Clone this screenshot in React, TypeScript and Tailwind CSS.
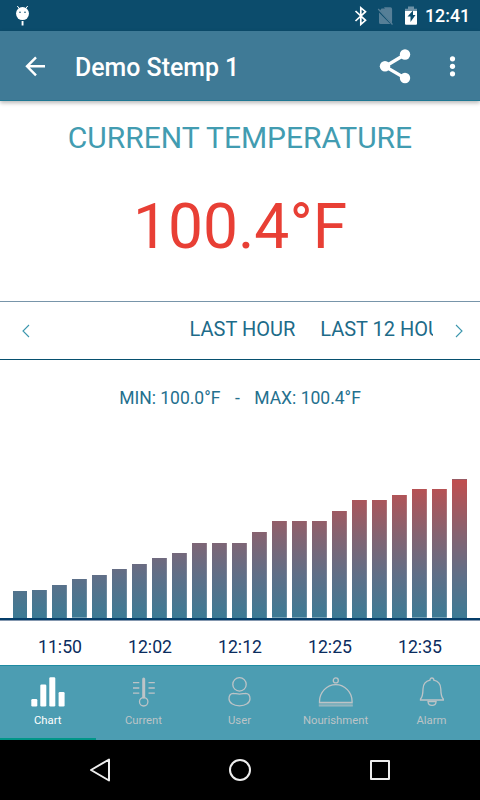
import type { ReactNode } from "react";

const barHeights = [27, 28, 33.5, 38.7, 43.5, 49, 54, 60, 65, 75.3, 75.3, 75.3, 86, 96.7, 96.7, 96.7, 107.3, 118, 118, 123.5, 128.7, 128.7, 139.3];
const times = ["11:50", "12:02", "12:12", "12:25", "12:35"];

function StatusBar() {
  return (
    <header className="flex h-[31px] shrink-0 items-start bg-[#0c4c6c] text-white">
      <svg className="ml-4 mt-1" width="14" height="24" viewBox="16 4 14 24" fill="white">
        <path d="M17.3 6l2.3 3M27.7 6l-2.3 3" stroke="white" strokeWidth="1" />
        <circle cx="22.5" cy="13.6" r="6.5" />
        <circle cx="20" cy="12.2" r=".8" fill="#0c4c6c" />
        <circle cx="25" cy="12.2" r=".8" fill="#0c4c6c" />
        <path d="M21.6 21h1.900v4.500h-1.900z" />
      </svg>
      <svg className="ml-auto" width="68" height="31" viewBox="352 0 68 31">
        <path d="M355.5 11l10 9.3-4.700 4V7.800l4.700 3.900-10 9.300" fill="none" stroke="white" strokeWidth="1.7" />
        <path d="M384 7.300h6.400q1.700 0 1.700 1.700v12zM379 12.500v10q0 1.600 1.600 1.600h9.800z" fill="#567f97" />
        <path d="M378.200 9l14.300 15.500" stroke="#567f97" strokeWidth="1.2" />
        <path d="M381.500 8.500h9q1.500 0 1.500 1.500v13.500l-12-13z" fill="#567f97" />
        <path d="M405 11V8.800h3V6.500h6v2.300h3V11z" fill="#6d91a6" />
        <path d="M405 11h12v12.800q0 1-1 1h-10q-1 0-1-1z" fill="white" />
        <path d="M413 10.500l-5.500 6h3v5.500l5-7H413z" fill="#0c4c6c" />
      </svg>
      <span className="ml-[5px] mr-[10px] mt-[5px] w-[45px] text-[17.8px] font-medium leading-[22px]">12:41</span>
    </header>
  );
}

function AppBar() {
  return (
    <div className="z-10 flex h-[70px] shrink-0 items-center border-b border-[#217893] bg-[#3f7a96] text-white shadow-[0_2px_4px_rgba(0,0,0,0.28)]">
      <svg className="ml-6" width="22" height="22" viewBox="24 55 22 22" fill="none" stroke="white" strokeWidth="2.4">
        <path d="M45 66.300H27M36 57.300l-9 9 9 9" />
      </svg>
      <h1 className="ml-[29px] mt-[5px] text-[24.9px] font-medium leading-8">Demo Stemp 1</h1>
      <svg className="ml-auto" width="32" height="36" viewBox="379 48 32 36" fill="white">
        <path d="M405 54.500l-20 12 20 11.700" fill="none" stroke="white" strokeWidth="3.3" />
        <circle cx="405" cy="54.500" r="5.2" />
        <circle cx="385" cy="66.300" r="5.2" />
        <circle cx="405" cy="78" r="5.2" />
      </svg>
      <svg className="ml-[36px] mr-[22px]" width="11" height="24" viewBox="447 54 11 24" fill="white">
        <circle cx="452.500" cy="58.800" r="2.600" />
        <circle cx="452.500" cy="66.300" r="2.600" />
        <circle cx="452.500" cy="73.800" r="2.600" />
      </svg>
    </div>
  );
}

function Chevron({ right = false }: { right?: boolean }) {
  return (
    <svg width="8" height="14" viewBox="0 0 8 14" fill="none" stroke="#3b96ad" strokeWidth="1.1">
      <path d={right ? "M1 1l6 6-6 6" : "M7 1L1 7l6 6"} />
    </svg>
  );
}

function Chart() {
  return (
    <section className="flex h-[246px] flex-col">
      <div className="flex h-[199px] items-end gap-[5.3px] pl-[12.5px]">
        {barHeights.map((height, i) => (
          <div
            key={i}
            className="w-[14.7px] shrink-0 bg-[linear-gradient(to_top,#3c7b95_0%,#5f6f88_30%,#856371_60%,#a7575d_83%,#c24e4e_100%)] bg-[length:100%_139px] bg-bottom"
            style={{ height }}
          />
        ))}
      </div>
      <div className="h-[3px] shrink-0 border-b border-[#8497af] bg-[#053e69]" />
      <div className="flex pl-[15px] pt-[15px] text-[17.7px] leading-[22px] text-[#0a2c5e]">
        {times.map((time) => (
          <span key={time} className="w-[90px] text-center">{time}</span>
        ))}
      </div>
    </section>
  );
}

function Tab({ label, active = false, children }: { label: string; active?: boolean; children: ReactNode }) {
  return (
    <div className={`flex flex-col items-center border-b-2 ${active ? "w-[95.5px] border-[#009688] text-white" : "w-24 border-transparent text-[#bdc4c7]"}`}>
      <svg className="mt-[10px]" width="40" height="32" viewBox="0 0 40 32" fill="none" stroke="currentColor" strokeWidth="1.3">
        {children}
      </svg>
      <span className="mt-[5px] text-[11.3px] leading-4">{label}</span>
    </div>
  );
}

function Tabs() {
  return (
    <nav className="flex h-[75px] shrink-0 border-t border-[#1f8ba2] bg-[#4c9db2]">
      <Tab label="Chart" active>
        <g fill="currentColor" stroke="none">
          <rect x="3.300" y="23" width="6" height="7.500" rx="1.200" />
          <rect x="12.300" y="8.500" width="6" height="22" rx="1.200" />
          <rect x="21.300" y="1.300" width="6" height="29.200" rx="1.200" />
          <rect x="30.600" y="16" width="6" height="14.500" rx="1.200" />
        </g>
      </Tab>
      <Tab label="Current">
        <path d="M19.700 21V3" strokeWidth="3" strokeLinecap="round" />
        <circle cx="19.700" cy="25.800" r="4.200" />
        <path d="M9 6.700h6.300M9 12h6.300M9 17.200h6.300M24.500 6.700h6.300M24.500 12h6.300M24.500 17.200h6.300" />
      </Tab>
      <Tab label="User">
        <path d="M19.500 1.700a6.700 6.700 0 1 1 0 13.400a6.700 6.700 0 1 1 0-13.400zM13.500 17.300c2 .2 3.700.8 6 .8s4-.6 6-.8c2.700 0 4.500 2.100 4.500 5.500 0 4-4.300 7-10.500 7S9 26.800 9 22.800c0-3.400 1.800-5.500 4.500-5.500z" />
      </Tab>
      <Tab label="Nourishment">
        <circle cx="19.800" cy="4.400" r="2.500" />
        <path d="M3.500 26.300v-.8a16.300 16.800 0 0 1 32.600 0v.8z" />
        <path d="M2.800 29.200h34" stroke="#8db5bf" />
        <path d="M2.800 27.800h34M2.800 30h34" strokeWidth=".7" />
      </Tab>
      <Tab label="Alarm">
        <path d="M8.500 24v-1c2.200-2 2.400-5 2.500-10 .1-4.800 2.700-8 7-8.900 0-2.800 3.800-2.800 3.800 0 4.300.9 6.900 4.100 7 8.900.1 5 .3 8 2.500 10v1z" />
        <path d="M16 25.500c.3 5.200 7.800 5.200 8.100 0z" />
      </Tab>
    </nav>
  );
}

export default function App() {
  return (
    <div className="flex h-[800px] w-[480px] flex-col overflow-hidden bg-white font-[Roboto,sans-serif]">
      <StatusBar />
      <AppBar />
      <main className="flex h-[564px] shrink-0 flex-col">
        <section className="h-[200px] text-center">
          <h2 className="pt-[19px] text-[30px] leading-9 text-[#429cb1]">CURRENT TEMPERATURE</h2>
          <p className="mt-[33px] text-[62.300px] leading-[76px] text-[#e83f35]">100.4°F</p>
        </section>
        <section className="flex h-[59px] items-center border-y border-t-[#7895aa] border-b-[#07506f] pl-[22px] pr-[17px]">
          <Chevron />
          <div className="ml-[159.500px] mr-[22px] flex flex-1 gap-[25px] overflow-hidden whitespace-nowrap pb-[3px] text-[20px] leading-6 text-[#1d6b89]">
            <span>LAST HOUR</span>
            <span>LAST 12 HOURS</span>
          </div>
          <Chevron right />
        </section>
        <p className="flex h-[59px] justify-center gap-[14.500px] pt-[27px] text-[17.500px] leading-[22px] text-[#24708e]">
          <span>MIN: 100.0°F</span>
          <span>-</span>
          <span>MAX: 100.4°F</span>
        </p>
        <Chart />
      </main>
      <Tabs />
      <footer className="flex h-[60px] shrink-0 items-center bg-black">
        <svg className="ml-[88px]" width="24" height="26" viewBox="88 757 24 26" fill="none" stroke="#eee" strokeWidth="2" strokeLinejoin="round">
          <path d="M91 770l18-10.500v21z" />
        </svg>
        <div className="ml-[117px] h-[22px] w-[22px] rounded-full border-2 border-[#eee]" />
        <div className="ml-[119px] h-5 w-5 rounded-[1px] border-2 border-[#eee]" />
      </footer>
    </div>
  );
}
